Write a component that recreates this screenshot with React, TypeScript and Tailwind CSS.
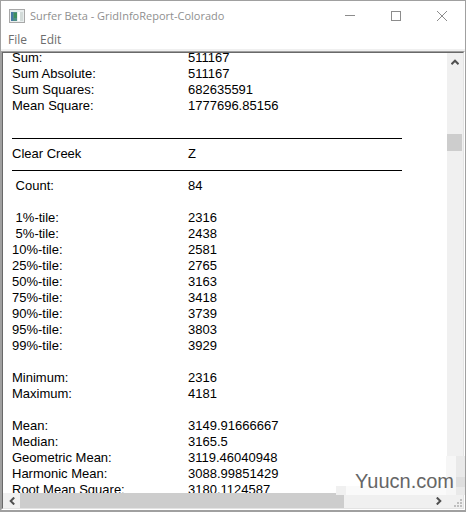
type Row = { label: string; value: string } | "blank" | "rule";

const ROWS: Row[] = [
  { label: "Sum:", value: "511167" },
  { label: "Sum Absolute:", value: "511167" },
  { label: "Sum Squares:", value: "682635591" },
  { label: "Mean Square:", value: "1777696.85156" },
  "blank",
  "rule",
  { label: "Clear Creek", value: "Z" },
  "rule",
  { label: " Count:", value: "84" },
  "blank",
  { label: " 1%-tile:", value: "2316" },
  { label: " 5%-tile:", value: "2438" },
  { label: "10%-tile:", value: "2581" },
  { label: "25%-tile:", value: "2765" },
  { label: "50%-tile:", value: "3163" },
  { label: "75%-tile:", value: "3418" },
  { label: "90%-tile:", value: "3739" },
  { label: "95%-tile:", value: "3803" },
  { label: "99%-tile:", value: "3929" },
  "blank",
  { label: "Minimum:", value: "2316" },
  { label: "Maximum:", value: "4181" },
  "blank",
  { label: "Mean:", value: "3149.91666667" },
  { label: "Median:", value: "3165.5" },
  { label: "Geometric Mean:", value: "3119.46040948" },
  { label: "Harmonic Mean:", value: "3088.99851429" },
  { label: "Root Mean Square:", value: "3180.1124587" },
];

function AppIcon() {
  return (
    <svg width="16" height="14" viewBox="0 0 16 14" shapeRendering="crispEdges" aria-hidden="true">
      <rect width="16" height="14" fill="#a8a8a8" />
      <rect x="1" y="1" width="14" height="12" fill="#e9eeee" />
      <rect x="2" y="3" width="6" height="9" fill="#4f8f86" />
      <rect x="2" y="3" width="2" height="9" fill="#4778a4" />
      <rect x="5" y="4" width="3" height="5" fill="#3f8f5c" />
      <rect x="9" y="3" width="2" height="9" fill="#ffffff" />
      <rect x="11" y="3" width="3" height="9" fill="#d3dbd9" />
    </svg>
  );
}

function TitleBar() {
  const button = "flex h-full w-[46px] items-center justify-center text-[#8c8c8c]";
  return (
    <header className="flex h-[30px] shrink-0 items-center bg-white pl-2">
      <AppIcon />
      <h1 className="flex-1 truncate pl-[5px] text-[11px] leading-4 text-[#8f8f8f]">
        Surfer Beta - GridInfoReport-Colorado
      </h1>
      <button className={button} aria-label="Minimize">
        <svg width="10" height="10" viewBox="0 0 10 10" stroke="currentColor" shapeRendering="crispEdges">
          <path d="M0 4.5h10" />
        </svg>
      </button>
      <button className={button} aria-label="Maximize">
        <svg width="10" height="10" viewBox="0 0 10 10" fill="none" stroke="currentColor" shapeRendering="crispEdges">
          <rect x="0.5" y="0.5" width="9" height="9" />
        </svg>
      </button>
      <button className={button} aria-label="Close">
        <svg width="10" height="10" viewBox="0 0 10 10" stroke="currentColor">
          <path d="M0 0l10 10M10 0L0 10" />
        </svg>
      </button>
    </header>
  );
}

function Report() {
  return (
    <main className="min-w-0 flex-1 overflow-hidden bg-white pl-[9px]">
      {/* scrolled part-way through the first line */}
      <table className="-mt-[3px] w-[390px] table-fixed border-collapse font-['Liberation_Sans',Arial,sans-serif] text-[13px] leading-4 text-black">
        <colgroup>
          <col className="w-[176px]" />
          <col />
        </colgroup>
        <tbody>
          {ROWS.map((row, i) => {
            if (row === "blank") {
              return (
                <tr key={i}>
                  <td colSpan={2} className="h-4 p-0" />
                </tr>
              );
            }
            if (row === "rule") {
              return (
                <tr key={i}>
                  <td colSpan={2} className="h-4 p-0">
                    <hr className="border-black" />
                  </td>
                </tr>
              );
            }
            return (
              <tr key={i}>
                <th scope="row" className="h-4 p-0 text-left font-normal whitespace-pre">
                  {row.label}
                </th>
                <td className="h-4 p-0">{row.value}</td>
              </tr>
            );
          })}
        </tbody>
      </table>
    </main>
  );
}

function VerticalScrollbar() {
  return (
    <div className="flex w-4 shrink-0 flex-col bg-[#f0f0f0]">
      <button className="flex h-[17px] items-center justify-center" aria-label="Scroll up">
        <svg width="8" height="6" viewBox="0 0 8 6" fill="none" stroke="#505050" strokeWidth="2">
          <path d="M0.5 5.2L4 1.7l3.5 3.5" />
        </svg>
      </button>
      <div className="mt-16 h-[17px] w-[15px] bg-[#cdcdcd]" />
    </div>
  );
}

function HorizontalScrollbar() {
  return (
    <div className="flex h-[15px] shrink-0 bg-[#f0f0f0]">
      <button className="flex w-[17px] items-center justify-center" aria-label="Scroll left">
        <svg width="6" height="8" viewBox="0 0 6 8" fill="none" stroke="#505050" strokeWidth="2">
          <path d="M5.2 0.5L1.7 4l3.5 3.5" />
        </svg>
      </button>
      <div className="flex-1">
        <div className="h-full w-[79%] bg-[#cdcdcd]" />
      </div>
      <button className="flex w-[17px] items-center justify-center" aria-label="Scroll right">
        <svg width="6" height="8" viewBox="0 0 6 8" fill="none" stroke="#505050" strokeWidth="2">
          <path d="M0.8 0.5L4.3 4L0.8 7.5" />
        </svg>
      </button>
      <div className="flex w-4 items-end justify-end p-px">
        <svg width="8" height="8" viewBox="0 0 8 8" fill="#bfbfbf" shapeRendering="crispEdges" aria-hidden="true">
          <path d="M6 0h2v2h-2zM3 3h2v2h-2zM6 3h2v2h-2zM0 6h2v2h-2zM3 6h2v2h-2zM6 6h2v2h-2z" />
        </svg>
      </div>
    </div>
  );
}

function Watermark() {
  return (
    <div className="pointer-events-none absolute right-0 bottom-[15px] flex items-end">
      <div className="h-[9px] w-[10px] bg-[#f0f0f0]" />
      <div className="h-[9px] w-[100px] bg-[#fafafa]" />
      <div className="h-[39px] w-[10px] bg-[#f6f6f6]" />
      <div className="flex h-[39px] w-[9px] flex-col justify-center bg-[#e9e9e9]">
        <div className="mt-3 h-[10px] bg-[#dedede]" />
      </div>
      <span className="absolute right-[11px] bottom-0 font-['Liberation_Sans',Arial,sans-serif] text-[20px] leading-7 text-[#666666]">
        Yuucn.com
      </span>
    </div>
  );
}

export default function App() {
  return (
    <div className="flex h-screen flex-col bg-[#a0a0a0] px-px pt-px pb-[2px] font-['Open_Sans','Noto_Sans',sans-serif]">
      <div className="relative flex min-h-0 flex-1 flex-col bg-white">
        <TitleBar />
        <nav className="flex h-[18px] shrink-0 items-center gap-[13px] bg-white pl-[7px] text-[12px] leading-4 text-[#6d6d6d]">
          <button>File</button>
          <button>Edit</button>
        </nav>
        <div className="h-[2px] shrink-0 bg-[#f0f0f0]" />
        <div className="flex min-h-0 flex-1 flex-col border border-t-[#a0a0a0] border-r-white border-b-white border-l-[#a0a0a0]">
          <div className="flex min-h-0 flex-1 flex-col border border-t-[#696969] border-r-[#e3e3e3] border-b-[#e3e3e3] border-l-[#696969]">
            <div className="flex min-h-0 flex-1">
              <Report />
              <VerticalScrollbar />
            </div>
            <HorizontalScrollbar />
          </div>
        </div>
        <Watermark />
      </div>
    </div>
  );
}
